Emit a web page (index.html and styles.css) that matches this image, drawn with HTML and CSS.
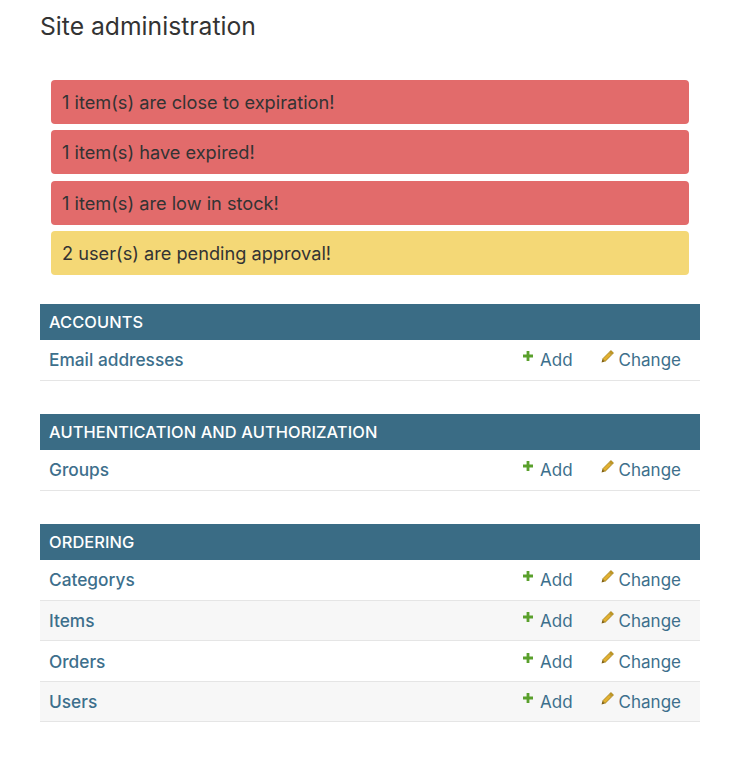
FILE: index.html
```html
<!DOCTYPE html>
<html lang="en">
<head>
<meta charset="utf-8">
<title>Site administration</title>
<link rel="stylesheet" href="styles.css">
</head>
<body>
<div class="content">
  <h1 class="title">Site administration</h1>
  <ul class="messages">
    <li class="msg error">1 item(s) are close to expiration!</li>
    <li class="msg error">1 item(s) have expired!</li>
    <li class="msg error">1 item(s) are low in stock!</li>
    <li class="msg warning">2 user(s) are pending approval!</li>
  </ul>

  <div class="module">
    <div class="caption">ACCOUNTS</div>
    <div class="row">
      <a class="model">Email addresses</a>
      <a class="action add"><svg class="ico" viewBox="0 0 10 10"><path d="M3.6 0h2.8v3.6H10v2.8H6.4V10H3.6V6.4H0V3.6h3.6z" fill="#5aa02c"/></svg>Add</a>
      <a class="action change"><svg class="ico pen" viewBox="0 0 12 12"><path d="M9.2 0.5l2.3 2.3-1.4 1.4-2.3-2.3z" fill="#c79a1c" stroke="#9c770c" stroke-width="0.7"/><path d="M7.4 2.3l2.3 2.3-5.9 5.9-2.3-2.3z" fill="#e2b030" stroke="#9c770c" stroke-width="0.7"/><path d="M1.3 8.4l2.3 2.3-3.1 0.9z" fill="#80600e"/></svg>Change</a>
    </div>
  </div>

  <div class="module">
    <div class="caption">AUTHENTICATION AND AUTHORIZATION</div>
    <div class="row">
      <a class="model">Groups</a>
      <a class="action add"><svg class="ico" viewBox="0 0 10 10"><path d="M3.6 0h2.8v3.6H10v2.8H6.4V10H3.6V6.4H0V3.6h3.6z" fill="#5aa02c"/></svg>Add</a>
      <a class="action change"><svg class="ico pen" viewBox="0 0 12 12"><path d="M9.2 0.5l2.3 2.3-1.4 1.4-2.3-2.3z" fill="#c79a1c" stroke="#9c770c" stroke-width="0.7"/><path d="M7.4 2.3l2.3 2.3-5.9 5.9-2.3-2.3z" fill="#e2b030" stroke="#9c770c" stroke-width="0.7"/><path d="M1.3 8.4l2.3 2.3-3.1 0.9z" fill="#80600e"/></svg>Change</a>
    </div>
  </div>

  <div class="module">
    <div class="caption">ORDERING</div>
    <div class="row">
      <a class="model">Categorys</a>
      <a class="action add"><svg class="ico" viewBox="0 0 10 10"><path d="M3.6 0h2.8v3.6H10v2.8H6.4V10H3.6V6.4H0V3.6h3.6z" fill="#5aa02c"/></svg>Add</a>
      <a class="action change"><svg class="ico pen" viewBox="0 0 12 12"><path d="M9.2 0.5l2.3 2.3-1.4 1.4-2.3-2.3z" fill="#c79a1c" stroke="#9c770c" stroke-width="0.7"/><path d="M7.4 2.3l2.3 2.3-5.9 5.9-2.3-2.3z" fill="#e2b030" stroke="#9c770c" stroke-width="0.7"/><path d="M1.3 8.4l2.3 2.3-3.1 0.9z" fill="#80600e"/></svg>Change</a>
    </div>
    <div class="row alt">
      <a class="model">Items</a>
      <a class="action add"><svg class="ico" viewBox="0 0 10 10"><path d="M3.6 0h2.8v3.6H10v2.8H6.4V10H3.6V6.4H0V3.6h3.6z" fill="#5aa02c"/></svg>Add</a>
      <a class="action change"><svg class="ico pen" viewBox="0 0 12 12"><path d="M9.2 0.5l2.3 2.3-1.4 1.4-2.3-2.3z" fill="#c79a1c" stroke="#9c770c" stroke-width="0.7"/><path d="M7.4 2.3l2.3 2.3-5.9 5.9-2.3-2.3z" fill="#e2b030" stroke="#9c770c" stroke-width="0.7"/><path d="M1.3 8.4l2.3 2.3-3.1 0.9z" fill="#80600e"/></svg>Change</a>
    </div>
    <div class="row">
      <a class="model">Orders</a>
      <a class="action add"><svg class="ico" viewBox="0 0 10 10"><path d="M3.6 0h2.8v3.6H10v2.8H6.4V10H3.6V6.4H0V3.6h3.6z" fill="#5aa02c"/></svg>Add</a>
      <a class="action change"><svg class="ico pen" viewBox="0 0 12 12"><path d="M9.2 0.5l2.3 2.3-1.4 1.4-2.3-2.3z" fill="#c79a1c" stroke="#9c770c" stroke-width="0.7"/><path d="M7.4 2.3l2.3 2.3-5.9 5.9-2.3-2.3z" fill="#e2b030" stroke="#9c770c" stroke-width="0.7"/><path d="M1.3 8.4l2.3 2.3-3.1 0.9z" fill="#80600e"/></svg>Change</a>
    </div>
    <div class="row alt">
      <a class="model">Users</a>
      <a class="action add"><svg class="ico" viewBox="0 0 10 10"><path d="M3.6 0h2.8v3.6H10v2.8H6.4V10H3.6V6.4H0V3.6h3.6z" fill="#5aa02c"/></svg>Add</a>
      <a class="action change"><svg class="ico pen" viewBox="0 0 12 12"><path d="M9.2 0.5l2.3 2.3-1.4 1.4-2.3-2.3z" fill="#c79a1c" stroke="#9c770c" stroke-width="0.7"/><path d="M7.4 2.3l2.3 2.3-5.9 5.9-2.3-2.3z" fill="#e2b030" stroke="#9c770c" stroke-width="0.7"/><path d="M1.3 8.4l2.3 2.3-3.1 0.9z" fill="#80600e"/></svg>Change</a>
    </div>
  </div>
</div>
</body>
</html>
```
FILE: styles.css
```css
html, body {
  margin: 0;
  padding: 0;
  background: #fff;
}
body {
  font-family: Inter, "Liberation Sans", sans-serif;
  color: #333;
}
.content {
  width: 660px;
  padding: 10px 0 0 40px;
}
.title {
  margin: 0;
  font-size: 24.7px;
  font-weight: 400;
  line-height: 32px;
  color: #333;
}
.messages {
  list-style: none;
  margin: 38px 11px 0 11px;
  padding: 0;
  display: flex;
  flex-direction: column;
  gap: 6.33px;
}
.msg {
  height: 44px;
  border-radius: 4px;
  padding: 0 11px;
  display: flex;
  align-items: center;
  font-size: 18.2px;
  color: #333;
}
.msg.error { background: #e26b6b; }
.msg.warning { background: #f4d876; }
.module {
  margin-top: 29px;
}
.module + .module {
  margin-top: 33px;
}
.caption {
  height: 36px;
  background: #3a6c85;
  color: #fff;
  font-size: 16.4px;
  font-weight: 500;
  padding: 0 9px;
  display: flex;
  align-items: center;
  letter-spacing: 0.1px;
}
.row {
  height: 40px;
  border-bottom: 1px solid #e5e5e5;
  display: flex;
  align-items: center;
  padding: 0 9px;
  font-size: 17px;
}
.row + .row {
  height: 39.5px;
}
.row.alt { background: #f7f7f7; }
.model {
  flex: 1;
  color: #3d6f8c;
  font-weight: 500;
  font-size: 17.3px;
}
.action {
  color: #3d6f8c;
  display: flex;
  align-items: center;
  padding-top: 1px;
}
.add { margin-right: 28px; }
.change { margin-right: 10px; }
.ico {
  width: 10px;
  height: 10px;
  margin-right: 7px;
  margin-top: -8px;
}
.ico.pen {
  width: 13px;
  height: 13px;
  margin-right: 5px;
}
```
